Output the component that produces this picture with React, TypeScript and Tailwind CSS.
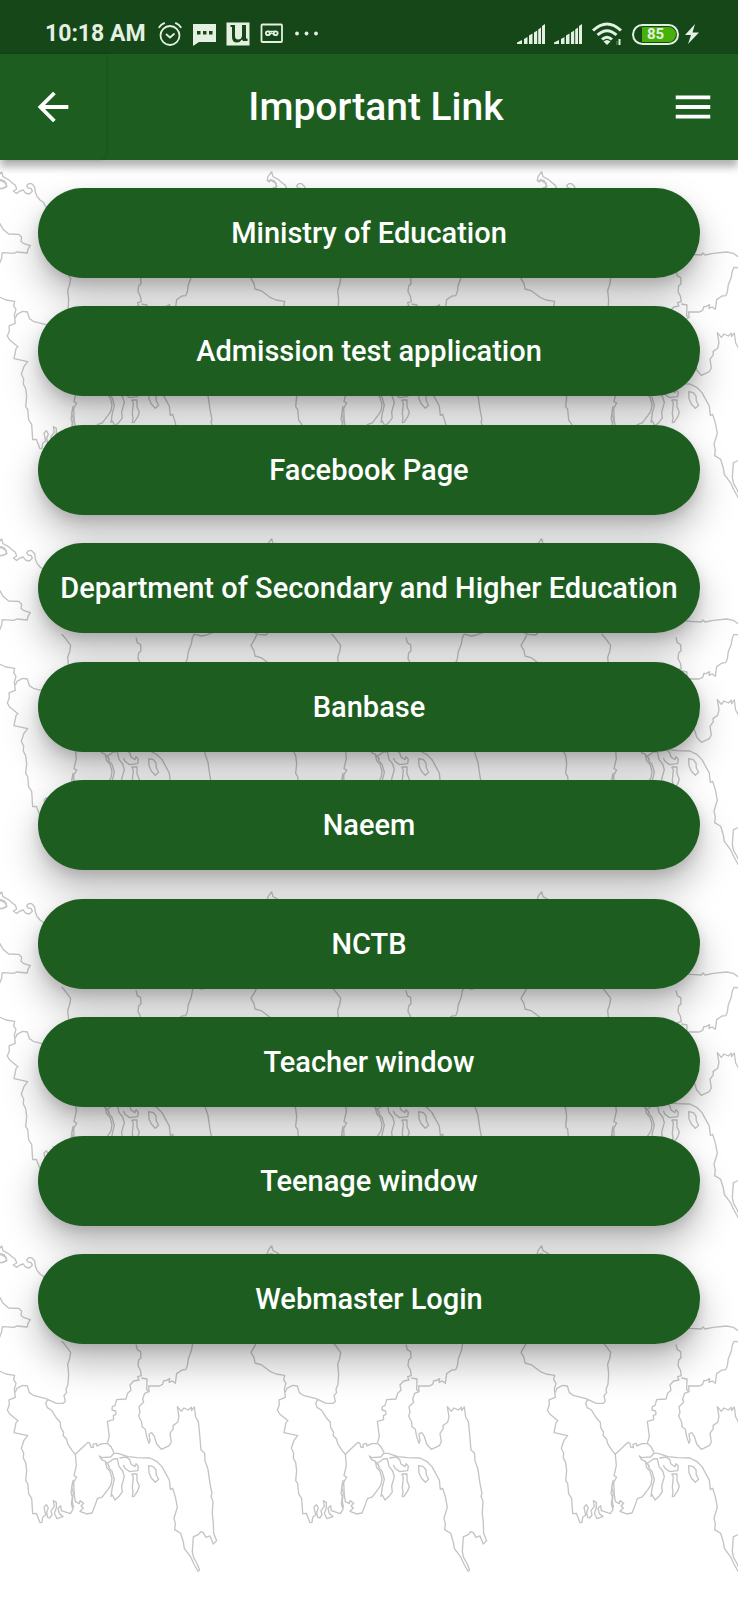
import React from "react";

const LINKS = [
  "Ministry of Education",
  "Admission test application",
  "Facebook Page",
  "Department of Secondary and Higher Education",
  "Banbase",
  "Naeem",
  "NCTB",
  "Teacher window",
  "Teenage window",
  "Webmaster Login",
];

const MAP_COLUMNS = [-270, 0, 270, 540];
const MAP_ROWS = [156, 523, 876, 1230];

/** Outline of the country's divisions, drawn at three times its display size. */
function MapOutline() {
  return (
    <g id="map-outline" transform="scale(0.3333)">
      <path d="M5 47L-6 62L-8 72L-2 78L2 71L12 74L18 82L20 92L8 97L-10 98M5 47L9 62L24 70L36 80L46 88L50 99L40 105L50 112L60 105L70 102L76 111L88 114L97 106L94 98L84 96L80 89L86 83L95 83L104 92L106 108L111 121L120 132L130 139L150 175L230 190L310 240L400 290L452 295L484 297L489 291L495 297L520 292L560 288L580 292L594 302L612 309L680 300L740 250L810 203L818 218L836 234L866 235L875 244L873 256L880 262L901 269L894 280L892 291L860 288L852 292L817 290L815 306L808 324L798 336L775 334L740 320L660 320L620 336L604 339L590 335L582 334L577 345L574 363L565 386L562 408L557 419L546 420L530 431L526 460L517 453L507 457L509 446L498 452L492 451L488 463L478 468L446 468L447 485L434 490L428 507L431 517L417 530L420 547L416 558L425 576L426 590L436 598L440 620L447 640L450 632L447 612L455 608L463 619L470 642L484 658L508 647L514 636L510 610L520 596L519 587L533 577L537 560L532 530L544 544L552 534L565 540L574 532L575 542L583 531L587 561L595 575L598 602L600 625L603 660L614 670L615 692L624 718L630 760L636 791L633 798L639 815L637 850L640 879L641 910L650 932L640 942L630 918L618 922L610 908L602 905L596 913L580 921L577 965L581 983L592 1002L599 1021L594 1024L582 1002L572 981L553 955L550 936L542 910L524 899L526 882L522 865L532 832L526 800L518 775L511 778L508 750L497 730L486 710L470 694L450 684L412 683L384 680L354 670L342 670L332 681L305 683L298 678L305 689L316 694L320 713L330 724L336 745L333 765L324 778L307 801L292 806L286 824L276 849L260 852L240 844L250 834L243 828L251 820L240 812L238 821L226 815L223 794L221 757L230 741L222 737L229 707L226 673" />
      <path d="M-40 335L-45 347L-57 367L-48 383L-45 399L-25 405L0 424L18 432L44 436L41 449L48 460L43 477L46 502L27 510L28 525L22 540L29 552L54 572L48 578L42 608L83 617L72 631L64 655L71 669L70 684L77 698L80 722L77 752L83 760L86 792L95 805L98 851L109 850L120 878L126 877L128 862L137 855L132 832L139 824L145 834L140 847L143 862L149 864L156 855L153 842L163 829L160 812L169 817L169 834L163 850L171 866L189 860L178 851L174 835L182 827L184 842L211 851L219 838L214 822L217 800L213 790L219 751L215 772L220 788L217 815L221 833" />
      <path d="M185 333L197 347L212 367L209 386L203 403L206 432L204 463L198 478L200 488L192 497L196 514L190 520H169L138 506L100 496L88 488L82 468L68 466L51 475L46 487M143 509L137 520L142 533L154 540L170 565L181 577L182 593L191 607L189 616L200 628L203 641L216 661L226 673L264 637L270 641L272 651L280 653L279 643L289 640L291 648L306 641L322 640L333 650L342 668M322 640L328 619L322 574L341 569L340 557L348 553L347 543L336 540L337 530L345 527L350 509L378 507L383 490L393 481L390 465L401 453L417 450L413 440L424 437L421 420L414 407L416 390L423 383L422 365L412 359L408 343M424 444L441 447L440 479L447 485" />
      <path d="M316 694L328 709L322 700L340 687L352 686L357 709L368 723L373 740L365 768L367 786L358 798L345 810L337 795L333 799L337 772L343 748L336 724L324 710M358 684L379 681L389 689L393 702L405 710L408 701L415 709L413 722L389 725L375 715L370 705M395 732H411V752L418 769L413 783L402 799L397 800L399 785L397 773L400 741L395 732M446 707L460 710L468 720L469 735L476 748L466 757L454 744L447 728ZM-10 74L3 73L18 82L20 92L7 98L-5 98" />
    </g>
  );
}

function MapBackdrop() {
  return (
    <svg
      className="absolute inset-0 h-full w-full"
      fill="none"
      stroke="#c4c4c4"
      strokeWidth="4"
      strokeLinejoin="round"
      aria-hidden="true"
    >
      <defs>
        <MapOutline />
      </defs>
      {MAP_ROWS.map((y) =>
        MAP_COLUMNS.map((x) => <use key={`${x}-${y}`} href="#map-outline" x={x} y={y} />),
      )}
    </svg>
  );
}

function SignalIcon() {
  return (
    <svg className="h-5 w-7" viewBox="0 0 28 20" fill="currentColor" aria-hidden="true">
      <path d="M0 20v-1.500l5-2.500v4zM7 15l3.500-2v7H7zM12 11.500l3.500-2V20H12zM17 8.500l3.200-2V20H17zM21.200 5.500l2.800-2V20h-2.800zM25 2l3-2v20h-3z" />
    </svg>
  );
}

function StatusBar() {
  return (
    <div className="flex h-[54px] items-center justify-between bg-[#164718] pt-[14px] pr-[38px] pl-[45px] text-[#e4f0e2]">
      <div className="flex items-center gap-[10px]">
        <span className="mr-0.5 text-[23px] leading-6 font-bold">10:18 AM</span>
        <svg className="size-6" viewBox="0 0 24 24" fill="none" stroke="currentColor" strokeWidth="1.800" strokeLinecap="round" aria-hidden="true">
          <circle cx="12" cy="13.500" r="9.500" />
          <path d="M8.500 12.500l3.500 3 4-3.500M1.200 5.200Q3 2.500 6.200 1.200M22.800 5.200Q21 2.500 17.800 1.200" />
        </svg>
        <svg className="size-6" viewBox="0 0 24 24" aria-hidden="true">
          <path fill="currentColor" d="M1 2h23v18H7l-6 4z" />
          <path fill="#164718" d="M5 9h3.500v3.500H5zM11 9h3.500v3.500H11zM17 9h3.500v3.500H17z" />
        </svg>
        <svg className="size-6" viewBox="0 0 24 24" aria-hidden="true">
          <rect x="0.500" y="0.500" width="23" height="23" fill="currentColor" />
          <path d="M4.500 3H9v11q0 3.500 3.200 3.500T16 14V3h4v13.500h1.500V19H17l-1-1.500Q14 20.500 11 20.500 6 20.500 6 15V5H4.500z" fill="#164718" />
        </svg>
        <svg className="size-6" viewBox="0 0 24 24" fill="none" stroke="currentColor" strokeWidth="1.800" aria-hidden="true">
          <rect x="1.500" y="2.500" width="20.500" height="17.500" rx="1" />
          <circle cx="7.800" cy="11.300" r="1.900" />
          <circle cx="15.700" cy="11.300" r="1.900" />
          <path d="M7.800 9.400h7.900M9 13.200l2.700-2.500 2.700 2.500" strokeWidth="1.200" />
        </svg>
        <svg className="size-6" viewBox="0 0 24 24" fill="currentColor" aria-hidden="true">
          <circle cx="3" cy="11.500" r="1.900" />
          <circle cx="12.500" cy="11.500" r="1.900" />
          <circle cx="22" cy="11.500" r="1.900" />
        </svg>
      </div>
      <div className="flex items-center gap-[9px]">
        <SignalIcon />
        <SignalIcon />
        <svg className="h-6 w-8" viewBox="0 0 32 24" fill="none" stroke="currentColor" strokeWidth="3" aria-hidden="true">
          <path d="M2 8.500Q16-4.500 30 8.500M6.500 13Q16 4.500 25.500 13M11 17.500Q16 13 21 17.500" />
          <path d="M12.500 19.500Q16 16.500 19.500 19.500L16 23z" fill="currentColor" stroke="none" />
          <path d="M28.500 17v6" strokeWidth="2" />
          <path d="M26 19v4" stroke="#7b8d4a" strokeWidth="1" />
        </svg>
        <div className="flex h-[21px] w-[47px] rounded-full border-2 border-current p-px">
          <div className="flex flex-1 items-center justify-center rounded-full bg-[linear-gradient(90deg,#164718_7px,#48b00a_7px)] text-[15px] leading-4 font-bold">
            85
          </div>
        </div>
        <svg className="-ml-1 h-5 w-4" viewBox="0 0 16 20" fill="currentColor" aria-hidden="true">
          <path d="M11 0L1 11h6L4 20 15 8.500H8.500z" />
        </svg>
      </div>
    </div>
  );
}

function AppBar() {
  return (
    <header className="relative grid h-[106px] grid-cols-[106px_1fr_92px] items-center bg-[#1d5e20] text-white shadow-[0_7px_8px_rgba(0,0,0,0.3)]">
      <button
        type="button"
        aria-label="Back"
        className="flex h-full items-center justify-center rounded-b-lg shadow-[1px_0_3px_rgba(0,0,0,0.15)]"
      >
        <svg className="size-[46px]" viewBox="0 0 24 24" fill="currentColor" aria-hidden="true">
          <path d="M20 11H7.830l5.590-5.590L12 4l-8 8 8 8 1.410-1.410L7.830 13H20z" />
        </svg>
      </button>
      <h1 className="text-center text-[39px] leading-[44px] font-medium">Important Link</h1>
      <button type="button" aria-label="Menu" className="flex h-full items-center justify-end pr-[22px]">
        <svg className="size-[46px]" viewBox="0 0 24 24" fill="currentColor" aria-hidden="true">
          <path d="M3 18h18v-2H3zM3 13h18v-2H3zM3 6v2h18V6z" />
        </svg>
      </button>
    </header>
  );
}

export default function App() {
  return (
    <div className="relative flex min-h-screen flex-col overflow-hidden bg-white font-['Roboto',sans-serif]">
      <MapBackdrop />
      <div className="relative">
        <StatusBar />
        <AppBar />
      </div>
      <main className="relative flex flex-1 flex-col px-[38px] pt-7 pb-64">
        <nav aria-label="Important links" className="flex flex-1 flex-col justify-between gap-7">
          {LINKS.map((label) => (
            <a
              key={label}
              href="#"
              className="flex min-h-[90px] items-center justify-center rounded-[45px] bg-[#1d5e20] px-4 text-center text-[29px] leading-[34px] font-medium text-white shadow-[0_20px_36px_rgba(0,0,0,0.27),0_5px_12px_rgba(0,0,0,0.12)]"
            >
              {label}
            </a>
          ))}
        </nav>
      </main>
    </div>
  );
}
